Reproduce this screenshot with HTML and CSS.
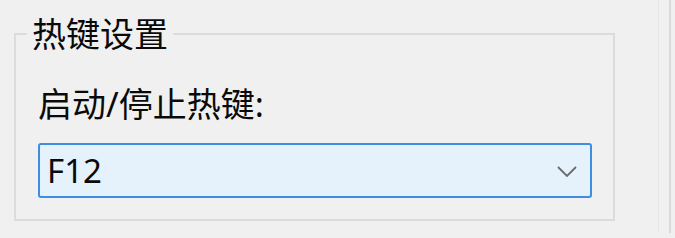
FILE: index.html
```html
<!DOCTYPE html>
<html lang="zh-CN">
  <head>
    <meta charset="UTF-8" />
    <meta name="viewport" content="width=device-width, initial-scale=1.0" />
    <title>热键设置</title>
    <link rel="stylesheet" href="styles.css">
  </head>
  <body>
    <div class="window">
      <div class="content">
        <fieldset class="group">
          <legend>热键设置</legend>
          <div class="field-label">启动/停止热键:</div>
          <div class="combo">
            <span class="combo-value">F12</span>
            <svg class="combo-arrow" width="20" height="11" viewBox="0 0 20 11">
              <polyline points="1,1 10,10 19,1" fill="none" stroke="#6a6a6a" stroke-width="1.8" />
            </svg>
          </div>
        </fieldset>
      </div>
      <div class="edge">
        <div class="edge-line"></div>
      </div>
    </div>
  </body>
</html>
```

FILE: styles.css
```css
body {
  margin: 0;
  padding: 0;
  background-color: #f0f0f0;
  font-family: "Noto Sans", "Noto Sans CJK SC", sans-serif;
  color: #0a0a0a;
  height: 238px;
  overflow: hidden;
}

.window {
  display: flex;
  height: 233px;
}

.content {
  flex: 1;
  padding: 14px 0 0 14px;
}

/* Group box */
.group {
  margin: 0;
  width: 554px;
  padding: 30px 21px 21px 22px;
  border: 2px solid #dcdcdc;
  border-radius: 0;
}

.group legend {
  margin-left: -11px;
  padding: 0 5px;
  font-size: 34px;
  line-height: 40px;
}

.field-label {
  font-size: 34px;
  line-height: 40px;
  margin-bottom: 19px;
}

/* Combo box */
.combo {
  height: 51px;
  display: flex;
  align-items: center;
  justify-content: space-between;
  background-color: #e5f1fb;
  border: 2px solid #3d8ee0;
  border-radius: 3px;
  padding: 0 13px 0 7px;
}

.combo-value {
  font-size: 33px;
  line-height: 40px;
}

.combo-arrow {
  display: block;
  margin-top: 2px;
}

/* Right window edge */
.edge {
  width: 12px;
  border-left: 1px solid #e6e6e6;
  display: flex;
  justify-content: flex-end;
  padding-right: 4px;
}

.edge-line {
  width: 2px;
  background-color: #dadada;
}
```
